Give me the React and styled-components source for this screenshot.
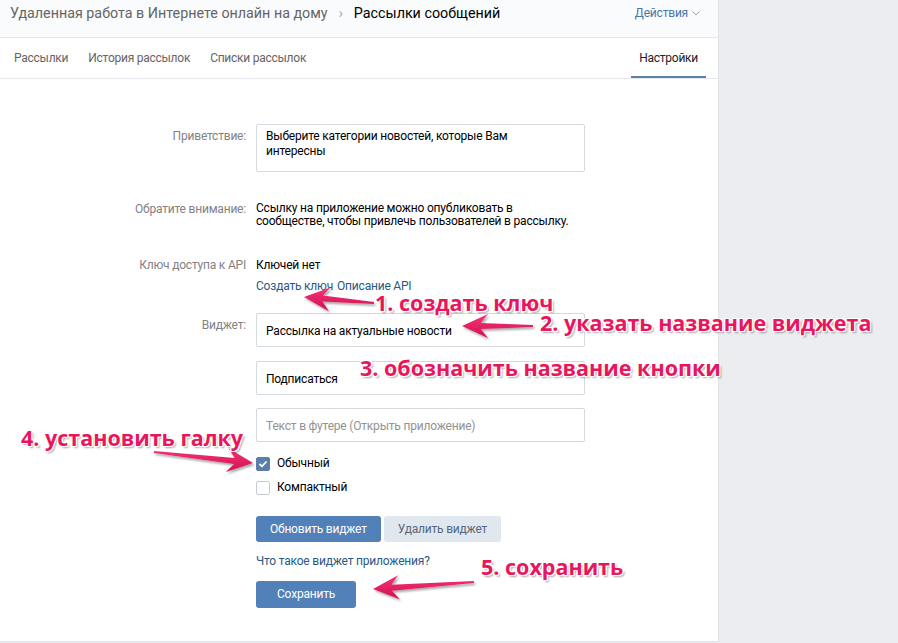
import React from "react";
import styled, { createGlobalStyle } from "styled-components";

const Global = createGlobalStyle`
  html, body { margin: 0; padding: 0; }
  body { background: #ebedf0; font-family: Roboto, "Open Sans", "Liberation Sans", sans-serif; }
  * { box-sizing: border-box; }
`;

const Page = styled.div`
  position: relative;
  width: 898px;
  height: 643px;
  background: #ebedf0;
  overflow: hidden;
`;

const Panel = styled.div`
  width: 719px;
  height: 642px;
  background: #fff;
  border-right: 1px solid #e1e3e8;
  border-bottom: 1px solid #e1e3e8;
  display: flex;
  flex-direction: column;
`;

const Header = styled.div`
  height: 38px;
  background: #fafbfc;
  border-bottom: 1px solid #e7e8ec;
  display: flex;
  align-items: flex-start;
  padding: 4px 18px 0 10px;
  font-size: 14.3px;
  line-height: 18px;
`;

const Crumb = styled.span`
  color: ${(p) => (p.$current ? "#000" : "#656565")};
`;

const Sep = styled.span`
  color: #a0a8b2;
  margin: 0 11px 0 11px;
  font-size: 14px;
`;

const Actions = styled.span`
  margin-left: auto;
  color: #4a76a8;
  font-size: 12px;
  letter-spacing: -0.2px;
  display: flex;
  align-items: center;
  gap: 4px;
  line-height: 18px;
`;

const Tabs = styled.div`
  height: 41px;
  border-bottom: 1px solid #e7e8ec;
  display: flex;
  padding: 0 12px 0 4px;
`;

const Tab = styled.div`
  padding: 0 ${(p) => (p.$active ? "8px" : "10px")};
  margin-left: ${(p) => (p.$active ? "auto" : "0")};
  display: flex;
  align-items: center;
  font-size: 12px;
  letter-spacing: -0.25px;
  color: ${(p) => (p.$active ? "#222" : "#656565")};
  border-bottom: 2px solid ${(p) => (p.$active ? "#5b81a8" : "transparent")};
  padding-top: 2px;
`;

const Form = styled.div`
  padding-top: 45px;
  display: flex;
  flex-direction: column;
  font-size: 12px;
  letter-spacing: -0.2px;
  line-height: 15px;
`;

const Row = styled.div`
  display: flex;
  margin-top: ${(p) => p.$mt || 0}px;
`;

const Label = styled.div`
  width: 256px;
  padding-right: 10px;
  text-align: right;
  color: #828282;
  padding-top: ${(p) => p.$pt || 0}px;
  flex-shrink: 0;
`;

const Value = styled.div`
  width: 329px;
  display: flex;
  flex-direction: column;
  color: #000;
`;

const Note = styled.div`
  line-height: 13px;
  max-width: 318px;
  color: #000;
`;

const TextArea = styled.div`
  height: 48px;
  border: 1px solid #d3d9de;
  border-radius: 2px;
  padding: 4px 40px 4px 9px;
  line-height: 15px;
  color: #000;
`;

const Input = styled.div`
  height: 34px;
  border: 1px solid #d3d9de;
  border-radius: 2px;
  padding: 0 9px;
  display: flex;
  align-items: center;
  padding-top: 2px;
  color: ${(p) => (p.$placeholder ? "#929292" : "#000")};
  margin-top: ${(p) => p.$mt || 0}px;
`;

const Links = styled.div`
  display: flex;
  gap: 4px;
  margin-top: 6px;
`;

const Link = styled.span`
  color: #2a5885;
  margin-top: ${(p) => p.$mt || 0}px;
`;

const Check = styled.div`
  display: flex;
  align-items: center;
  gap: 7px;
  margin-top: ${(p) => p.$mt || 0}px;
  color: #000;
`;

const Box = styled.span`
  width: 14px;
  height: 14px;
  border-radius: 2px;
  display: flex;
  align-items: center;
  justify-content: center;
  background: ${(p) => (p.$on ? "#5b7fa6" : "#fff")};
  border: 1px solid ${(p) => (p.$on ? "#5b7fa6" : "#c5ccd3")};
`;

const Buttons = styled.div`
  display: flex;
  gap: 3px;
  margin-top: 21px;
`;

const Button = styled.div`
  height: ${(p) => (p.$tall ? 27 : 26)}px;
  padding: 0 ${(p) => p.$px || 14}px;
  border-radius: 3px;
  display: flex;
  align-items: center;
  background: ${(p) => (p.$secondary ? "#e1e7ee" : "#5181b8")};
  color: ${(p) => (p.$secondary ? "#55677d" : "#fff")};
  align-self: flex-start;
  margin-top: ${(p) => p.$mt || 0}px;
`;

const Overlay = styled.svg`
  position: absolute;
  left: 0;
  top: 0;
  pointer-events: none;
`;

const Callout = styled.div`
  position: absolute;
  font-family: "Open Sans", "DejaVu Sans", sans-serif;
  font-weight: 700;
  font-size: 21.5px;
  line-height: 20px;
  color: #e8175d;
  white-space: nowrap;
  text-shadow:
    -1px -1px 0 #fff, 1px -1px 0 #fff, -1px 1px 0 #fff, 1px 1px 0 #fff,
    0 -1px 0 #fff, 0 1px 0 #fff, -1px 0 0 #fff, 1px 0 0 #fff,
    2px 2px 2px rgba(0, 0, 0, 0.35);
`;

function arrowPoints(tail, tip, headLen = 26, headW = 12, w1 = 1, w2 = 3) {
  const dx = tip[0] - tail[0];
  const dy = tip[1] - tail[1];
  const len = Math.hypot(dx, dy);
  const u = [dx / len, dy / len];
  const n = [-u[1], u[0]];
  const at = (d, s) => [tip[0] - u[0] * d + n[0] * s, tip[1] - u[1] * d + n[1] * s];
  const neck = headLen * 0.72;
  const pts = [
    [tail[0] + n[0] * w1, tail[1] + n[1] * w1],
    at(neck, w2),
    at(headLen, headW),
    tip,
    at(headLen, -headW),
    at(neck, -w2),
    [tail[0] - n[0] * w1, tail[1] - n[1] * w1],
  ];
  return pts.map((p) => p.map((v) => v.toFixed(1)).join(",")).join(" ");
}

const arrows = [
  { tail: [374, 303], tip: [304, 297] },
  { tail: [533, 326], tip: [462, 326] },
  { tail: [154, 452], tip: [253, 463] },
  { tail: [474, 582], tip: [373, 589] },
];

const notes = [
  { x: 375, y: 293, t: "1. создать ключ" },
  { x: 540, y: 313, t: "2. указать название виджета" },
  { x: 360, y: 358, t: "3. обозначить название кнопки" },
  { x: 21, y: 428, t: "4. установить галку" },
  { x: 481, y: 557, t: "5. сохранить" },
];

export default function App() {
  return (
    <>
      <Global />
      <Page>
        <Panel>
          <Header>
            <Crumb>Удаленная работа в Интернете онлайн на дому</Crumb>
            <Sep>›</Sep>
            <Crumb $current>Рассылки сообщений</Crumb>
            <Actions>
              Действия
              <svg width="8" height="5" viewBox="0 0 8 5">
                <polyline points="0.5,0.5 4,4 7.5,0.5" fill="none" stroke="#9aaabb" strokeWidth="1" />
              </svg>
            </Actions>
          </Header>
          <Tabs>
            <Tab>Рассылки</Tab>
            <Tab>История рассылок</Tab>
            <Tab>Списки рассылок</Tab>
            <Tab $active>Настройки</Tab>
          </Tabs>
          <Form>
            <Row>
              <Label $pt={5}>Приветствие:</Label>
              <Value>
                <TextArea>Выберите категории новостей, которые Вам интересны</TextArea>
              </Value>
            </Row>
            <Row $mt={30}>
              <Label>Обратите внимание:</Label>
              <Value>
                <Note>
                  Ссылку на приложение можно опубликовать в сообществе, чтобы привлечь пользователей в рассылку.
                </Note>
              </Value>
            </Row>
            <Row $mt={30}>
              <Label>Ключ доступа к API</Label>
              <Value>
                <div>Ключей нет</div>
                <Links>
                  <Link>Создать ключ</Link>
                  <Link>Описание API</Link>
                </Links>
              </Value>
            </Row>
            <Row $mt={19}>
              <Label $pt={5}>Виджет:</Label>
              <Value>
                <Input>Рассылка на актуальные новости</Input>
                <Input $mt={14}>Подписаться</Input>
                <Input $mt={13} $placeholder>
                  Текст в футере (Открыть приложение)
                </Input>
                <Check $mt={14}>
                  <Box $on>
                    <svg width="10" height="8" viewBox="0 0 10 8">
                      <polyline points="1.5,4 4,6.3 8.5,1.5" fill="none" stroke="#fff" strokeWidth="1.8" />
                    </svg>
                  </Box>
                  Обычный
                </Check>
                <Check $mt={9}>
                  <Box />
                  Компактный
                </Check>
                <Buttons>
                  <Button>Обновить виджет</Button>
                  <Button $secondary>Удалить виджет</Button>
                </Buttons>
                <Link $mt={12}>Что такое виджет приложения?</Link>
                <Button $tall $px={21} $mt={12}>
                  Сохранить
                </Button>
              </Value>
            </Row>
          </Form>
        </Panel>

        <Overlay width="898" height="643" viewBox="0 0 898 643">
          <defs>
            <linearGradient id="ag" x1="0" y1="0" x2="0" y2="1">
              <stop offset="0" stopColor="#f5357a" />
              <stop offset="1" stopColor="#d1104f" />
            </linearGradient>
            <filter id="sh" x="-20%" y="-50%" width="140%" height="200%">
              <feDropShadow dx="1.5" dy="2" stdDeviation="1.2" floodColor="#000" floodOpacity="0.35" />
            </filter>
          </defs>
          {arrows.map((a, i) => (
            <polygon key={i} points={arrowPoints(a.tail, a.tip)} fill="url(#ag)" filter="url(#sh)" />
          ))}
        </Overlay>
        {notes.map((n) => (
          <Callout key={n.t} style={{ left: n.x, top: n.y }}>
            {n.t}
          </Callout>
        ))}
      </Page>
    </>
  );
}
